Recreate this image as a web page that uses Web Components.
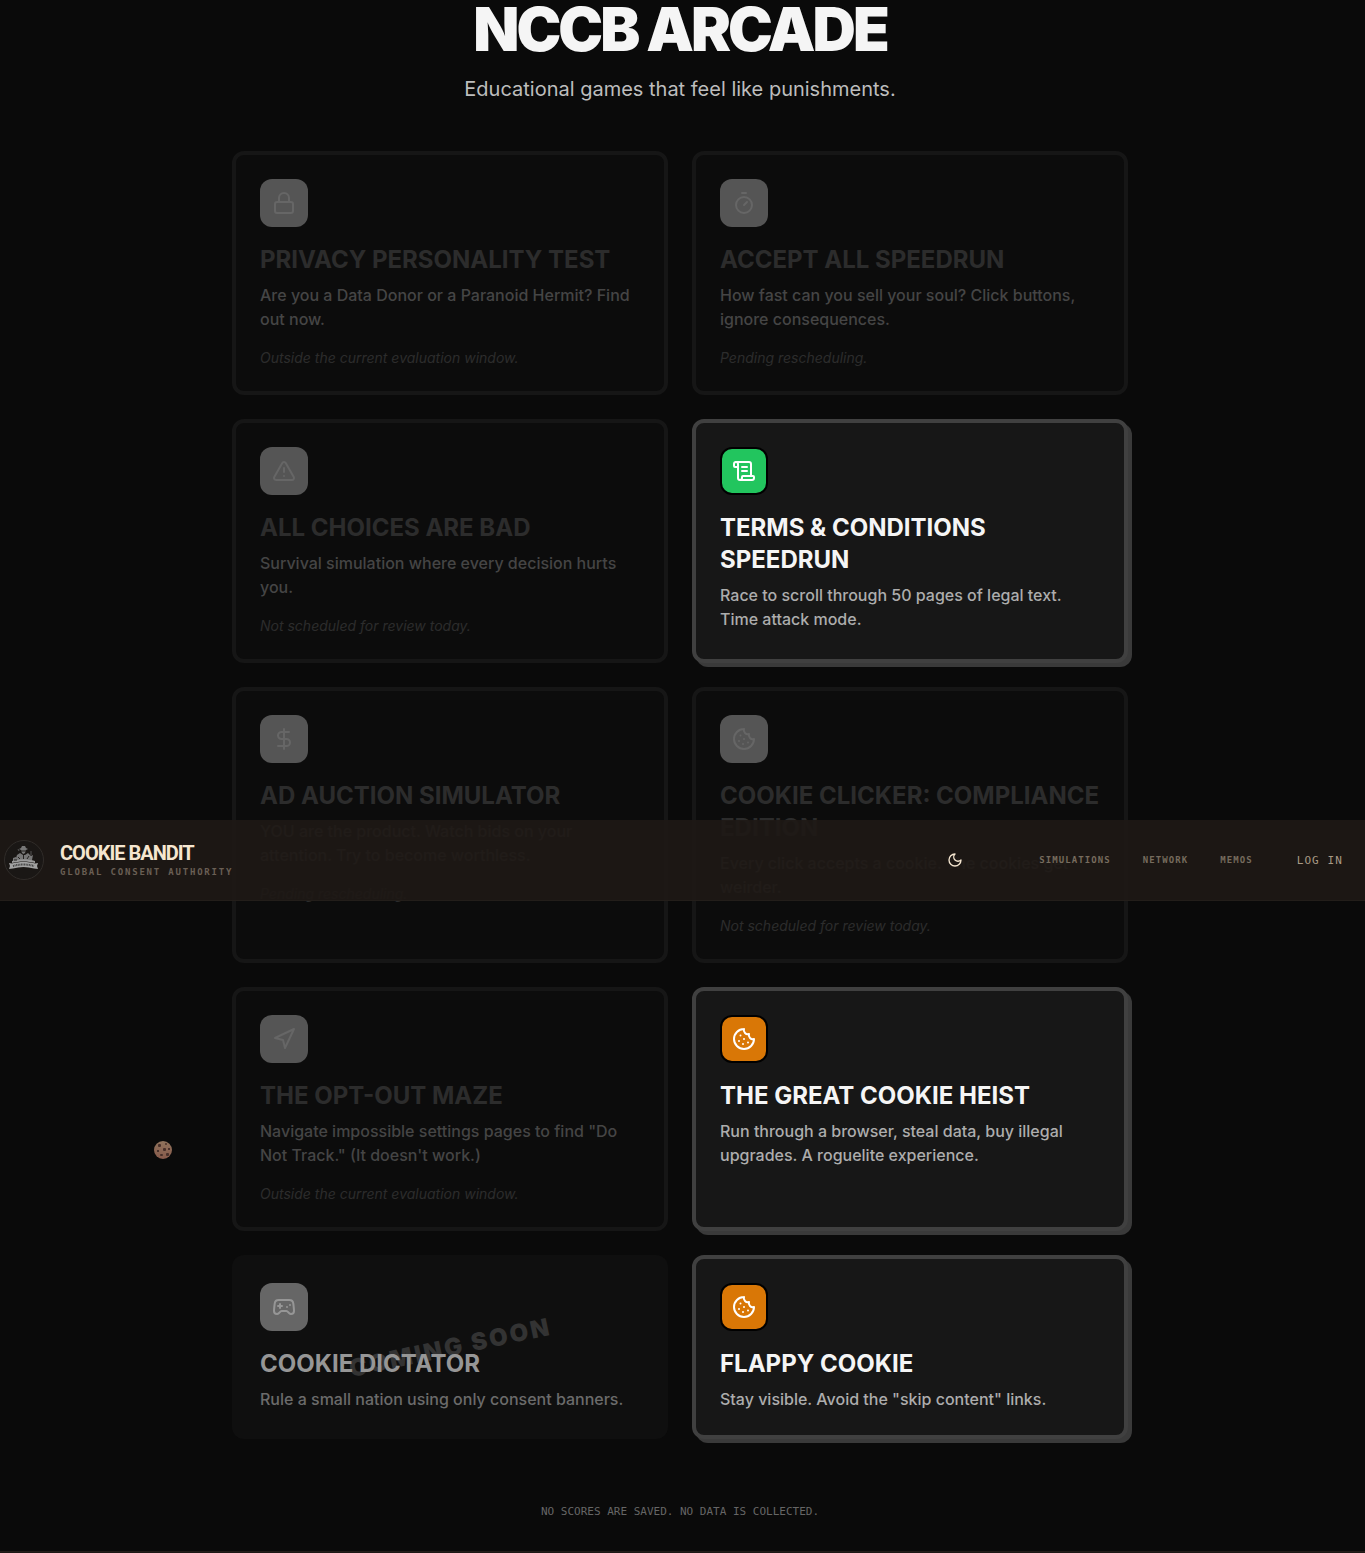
<!DOCTYPE html>
<html lang="en">
<head>
<meta charset="utf-8">
<meta name="viewport" content="width=device-width, initial-scale=1">
<title>NCCB Arcade</title>
<style>
  :root {
    --mono: "DejaVu Sans Mono", monospace;
    --bark: #1c1815;
    --cream: #f5e6d0;
  }
  body {
    margin: 0;
    background: #0a0a0a;
    color: #f5f5f5;
    font-family: Inter, "Liberation Sans", sans-serif;
  }
</style>
</head>
<body>
<site-nav></site-nav>

<arcade-page>
  <span slot="title">NCCB Arcade</span>
  <span slot="lead">Educational games that feel like punishments.</span>

  <game-card state="locked" icon="lock">
    <span slot="title">Privacy Personality Test</span>
    Are you a Data Donor or a Paranoid Hermit? Find out now.
    <span slot="note">Outside the current evaluation window.</span>
  </game-card>
  <game-card state="locked" icon="timer">
    <span slot="title">Accept All Speedrun</span>
    How fast can you sell your soul? Click buttons, ignore consequences.
    <span slot="note">Pending rescheduling.</span>
  </game-card>
  <game-card state="locked" icon="alert">
    <span slot="title">All Choices Are Bad</span>
    Survival simulation where every decision hurts you.
    <span slot="note">Not scheduled for review today.</span>
  </game-card>
  <game-card state="open" icon="scroll" style="--tile: #22c55e">
    <span slot="title">Terms &amp; Conditions Speedrun</span>
    Race to scroll through 50 pages of legal text. Time attack mode.
  </game-card>
  <game-card state="locked" icon="dollar">
    <span slot="title">Ad Auction Simulator</span>
    YOU are the product. Watch bids on your attention. Try to become worthless.
    <span slot="note">Pending rescheduling.</span>
  </game-card>
  <game-card state="locked" icon="cookie">
    <span slot="title">Cookie Clicker: Compliance Edition</span>
    Every click accepts a cookie. The cookies get weirder.
    <span slot="note">Not scheduled for review today.</span>
  </game-card>
  <game-card state="locked" icon="navigation">
    <span slot="title">The Opt-Out Maze</span>
    Navigate impossible settings pages to find "Do Not Track." (It doesn't work.)
    <span slot="note">Outside the current evaluation window.</span>
  </game-card>
  <game-card state="open" icon="cookie">
    <span slot="title">The Great Cookie Heist</span>
    Run through a browser, steal data, buy illegal upgrades. A roguelite experience.
  </game-card>
  <game-card state="soon" icon="gamepad">
    <span slot="title">Cookie Dictator</span>
    Rule a small nation using only consent banners.
  </game-card>
  <game-card state="open" icon="cookie">
    <span slot="title">Flappy Cookie</span>
    Stay visible. Avoid the "skip content" links.
  </game-card>

  <span slot="disclaimer">No scores are saved. No data is collected.</span>
</arcade-page>

<stray-cookie></stray-cookie>

<script>
const icons = {
  lock: '<rect width="18" height="11" x="3" y="11" rx="2"/><path d="M7 11V7a5 5 0 0 1 10 0v4"/>',
  timer: '<line x1="10" x2="14" y1="2" y2="2"/><line x1="12" x2="15" y1="14" y2="11"/><circle cx="12" cy="14" r="8"/>',
  alert: '<path d="m21.73 18-8-14a2 2 0 0 0-3.48 0l-8 14A2 2 0 0 0 4 21h16a2 2 0 0 0 1.73-3"/><path d="M12 9v4"/><path d="M12 17h.01"/>',
  scroll: '<path d="M15 12h-5"/><path d="M15 8h-5"/><path d="M19 17V5a2 2 0 0 0-2-2H4"/><path d="M8 21h12a2 2 0 0 0 2-2v-1a1 1 0 0 0-1-1H11a1 1 0 0 0-1 1v1a2 2 0 1 1-4 0V5a2 2 0 1 0-4 0v2a1 1 0 0 0 1 1h3"/>',
  dollar: '<line x1="12" x2="12" y1="2" y2="22"/><path d="M17 5H9.5a3.5 3.5 0 0 0 0 7h5a3.5 3.5 0 0 1 0 7H6"/>',
  cookie: '<path d="M12 2a10 10 0 1 0 10 10 4 4 0 0 1-5-5 4 4 0 0 1-5-5"/><path d="M8.5 8.5v.01"/><path d="M16 15.5v.01"/><path d="M12 12v.01"/><path d="M11 17v.01"/><path d="M7 14v.01"/>',
  navigation: '<polygon points="3 11 22 2 13 21 11 13 3 11"/>',
  gamepad: '<line x1="6" x2="10" y1="11" y2="11"/><line x1="8" x2="8" y1="9" y2="13"/><line x1="15" x2="15.01" y1="12" y2="12"/><line x1="18" x2="18.01" y1="10" y2="10"/><path d="M17.32 5H6.68a4 4 0 0 0-3.978 3.59c-.006.052-.01.101-.017.152C2.604 9.416 2 14.456 2 16a3 3 0 0 0 3 3c1 0 1.5-.5 2-1l1.414-1.414A2 2 0 0 1 9.828 16h4.344a2 2 0 0 1 1.414.586L17 18c.5.5 1 1 2 1a3 3 0 0 0 3-3c0-1.545-.604-6.584-.685-7.258-.007-.05-.011-.1-.017-.151A4 4 0 0 0 17.32 5z"/>',
  moon: '<path d="M12 3a6 6 0 0 0 9 9 9 9 0 1 1-9-9Z"/>'
}

const icon = (name) => `
  <svg viewBox="0 0 24 24" fill="none" stroke="currentColor" stroke-width="2"
    stroke-linecap="round" stroke-linejoin="round" aria-hidden="true">${icons[name]}</svg>`

class GameCard extends HTMLElement {
  constructor () {
    super()
    this.attachShadow({ mode: 'open' })
  }

  connectedCallback () {
    const state = this.getAttribute('state')
    const tag = state === 'open' ? 'a href="#play"' : 'article'
    this.shadowRoot.innerHTML = `
      <style>
        :host { display: block; }
        * { box-sizing: border-box; }
        .card {
          position: relative;
          display: block;
          height: 100%;
          padding: 24px;
          border: 4px solid #161616;
          border-radius: 12px;
          background: #0c0c0c;
          color: #2c2c2c;
          text-decoration: none;
          overflow: hidden;
        }
        .tile {
          display: grid;
          place-items: center;
          width: 48px;
          height: 48px;
          margin-bottom: 17px;
          border-radius: 12px;
          background: #555;
          color: #666;
        }
        .tile svg { width: 24px; height: 24px; }
        h2 {
          margin: 0 0 7px;
          font-size: 24px;
          line-height: 32px;
          font-weight: 700;
          text-transform: uppercase;
        }
        p { margin: 0; }
        .text {
          color: #454545;
          font-size: 16px;
          line-height: 24px;
          font-weight: 500;
        }
        .note {
          margin-top: 17px;
          font-size: 14px;
          line-height: 19px;
          font-style: italic;
        }

        .open {
          overflow: visible;
          border-color: #404040;
          background: #171717;
          box-shadow: 4px 4px 0 #3a3a3a;
          color: #f5f5f5;
        }
        .open .tile {
          border: 2px solid #000;
          background: var(--tile, #d97706);
          color: #fff;
        }
        .open .text { color: #adadad; }

        .soon {
          border-color: transparent;
          background: #0f0f0f;
          color: #969696;
        }
        .soon .tile { background: #666; color: #969696; }
        .soon .text { color: #6b6b6b; }
        .soon > :not(.stamp) { position: relative; }
        .stamp {
          position: absolute;
          inset: 0;
          display: grid;
          place-items: center;
          transform: rotate(-12deg);
          color: #333;
          font-size: 24px;
          font-weight: 900;
          letter-spacing: 0.1em;
          text-transform: uppercase;
        }
      </style>
      <${tag} class="card ${state}">
        ${state === 'soon' ? '<div class="stamp">Coming soon</div>' : ''}
        <div class="tile">${icon(this.getAttribute('icon'))}</div>
        <h2><slot name="title"></slot></h2>
        <p class="text"><slot></slot></p>
        ${state === 'locked' ? '<p class="note"><slot name="note"></slot></p>' : ''}
      </${tag.split(' ')[0]}>
    `
  }
}

class ArcadePage extends HTMLElement {
  constructor () {
    super()
    this.attachShadow({ mode: 'open' }).innerHTML = `
      <style>
        :host { display: block; }
        main {
          max-width: 896px;
          margin: 0 auto;
          padding: 0 21px 30px 16px;
        }
        header { margin-bottom: 48px; text-align: center; }
        h1 {
          margin: 0 0 16px;
          font-size: 60px;
          line-height: 59px;
          font-weight: 900;
          letter-spacing: -0.05em;
          text-transform: uppercase;
        }
        .lead {
          margin: 0;
          color: #bdbdbd;
          font-size: 20px;
          line-height: 28px;
        }
        .games {
          display: grid;
          grid-template-columns: repeat(2, minmax(0, 1fr));
          gap: 24px;
        }
        .disclaimer {
          margin: 64px 0 0;
          color: #666;
          font-family: var(--mono);
          font-size: 11px;
          line-height: 18px;
          text-align: center;
          text-transform: uppercase;
        }
        footer {
          height: 1px;
          border-top: 1px solid #231c19;
          background: var(--bark);
        }
        @media (max-width: 700px) {
          .games { grid-template-columns: 1fr; }
        }
      </style>
      <main>
        <header>
          <h1><slot name="title"></slot></h1>
          <p class="lead"><slot name="lead"></slot></p>
        </header>
        <div class="games"><slot></slot></div>
        <p class="disclaimer"><slot name="disclaimer"></slot></p>
      </main>
      <footer></footer>
    `
  }
}

class SiteNav extends HTMLElement {
  constructor () {
    super()
    this.attachShadow({ mode: 'open' }).innerHTML = `
      <style>
        /* the bar floats over the list of games */
        :host {
          position: absolute;
          top: 820px;
          left: 0;
          right: 0;
          z-index: 10;
          display: block;
        }
        nav {
          display: flex;
          align-items: center;
          height: 80px;
          padding: 0 22px 0 4px;
          border-bottom: 1px solid #231e1a;
          background: rgb(30 25 22 / 0.93);
          font-family: var(--mono);
        }
        a { color: inherit; text-decoration: none; }
        .brand {
          display: flex;
          align-items: center;
          gap: 16px;
          margin-right: auto;
        }
        .seal { width: 40px; height: 40px; }
        .name {
          display: block;
          color: var(--cream);
          font: 700 20px/24px Roboto, "Liberation Sans", sans-serif;
          letter-spacing: -0.05em;
          text-transform: uppercase;
        }
        .tagline {
          display: block;
          color: #6a5f54;
          font-size: 9px;
          font-weight: 700;
          line-height: 14px;
          letter-spacing: 0.2em;
          text-transform: uppercase;
        }
        button {
          display: grid;
          place-items: center;
          width: 36px;
          height: 36px;
          margin-right: 66px;
          padding: 0;
          border: 0;
          background: none;
          color: var(--cream);
        }
        button svg { width: 16px; height: 16px; }
        .links {
          display: flex;
          gap: 32px;
          margin-right: 44px;
          color: #766b5d;
          font-size: 9px;
          font-weight: 700;
          letter-spacing: 0.12em;
          text-transform: uppercase;
        }
        .login {
          color: #a89a85;
          font-size: 11px;
          letter-spacing: 0.1em;
          text-transform: uppercase;
        }
      </style>
      <nav>
        <a class="brand" href="#home">
          <svg class="seal" viewBox="0 0 40 40" aria-hidden="true">
            <circle cx="20" cy="20" r="19.5" fill="#1a1715" stroke="#302c29"/>
            <g fill="#777">
              <path d="M17 8l1-2h3l1 2 2 1-2 1h-5l-2-1z"/>
              <path d="M17 10h5l-1 3-1.500 1-1.500-1z"/>
              <path d="M13 15l3-2 3 2h2l3-2 3 3 1 5H11z"/>
              <path d="M9 18l3-1 1 4H9zM26 20l1-4 2-1-1 5z"/>
              <path d="M8 21c7-2 16-2 23 0v2c-7-2-16-2-23 0z" fill="#999"/>
            </g>
            <path d="M5 23l3 .5c7-2 16-2 23 0l3-.5-1 3 1 3-4-.5c-7-2-14-2-21 0l-4 .5 1-3z" fill="#a2a2a2"/>
            <g fill="none" stroke="#242220">
              <path d="M17 11h5"/>
              <path d="M14 17l2 2M19.500 15v4M25 16l-2 3M10 20h3"/>
              <path d="M9 26c7-2 14-2 21 0" stroke="#444" stroke-width="2" stroke-dasharray="1 .6"/>
            </g>
            <path d="M14 9l1 2M27 11v4" fill="none" stroke="#555"/>
          </svg>
          <span>
            <span class="name">Cookie Bandit</span>
            <span class="tagline">Global Consent Authority</span>
          </span>
        </a>
        <button type="button" aria-label="Toggle theme">${icon('moon')}</button>
        <div class="links">
          <a href="#simulations">Simulations</a>
          <a href="#network">Network</a>
          <a href="#memos">Memos</a>
        </div>
        <a class="login" href="#login">Log in</a>
      </nav>
    `
  }
}

class StrayCookie extends HTMLElement {
  constructor () {
    super()
    this.attachShadow({ mode: 'open' }).innerHTML = `
      <style>
        :host {
          position: absolute;
          top: 1141px;
          left: 154px;
          width: 18px;
          height: 18px;
        }
        svg { display: block; width: 100%; height: 100%; }
      </style>
      <svg viewBox="0 0 18 18" aria-hidden="true">
        <defs>
          <linearGradient id="dough" x1="0" y1="0" x2="0" y2="1">
            <stop offset="0" stop-color="#8f735c"/>
            <stop offset="1" stop-color="#885a4b"/>
          </linearGradient>
        </defs>
        <circle cx="9" cy="9" r="9" fill="url(#dough)"/>
        <g fill="#48302a">
          <rect x="4" y="3" width="3" height="3" rx="1"/>
          <rect x="11" y="2" width="2" height="2" rx="1"/>
          <rect x="9" y="7" width="3" height="3" rx="1"/>
          <rect x="3" y="9" width="2" height="2"/>
          <rect x="14" y="7" width="2" height="2"/>
          <rect x="6" y="13" width="3" height="2" rx="1"/>
          <rect x="12" y="12" width="3" height="3" rx="1"/>
        </g>
      </svg>
    `
  }
}

window.customElements.define('game-card', GameCard)
window.customElements.define('arcade-page', ArcadePage)
window.customElements.define('site-nav', SiteNav)
window.customElements.define('stray-cookie', StrayCookie)
</script>
</body>
</html>
